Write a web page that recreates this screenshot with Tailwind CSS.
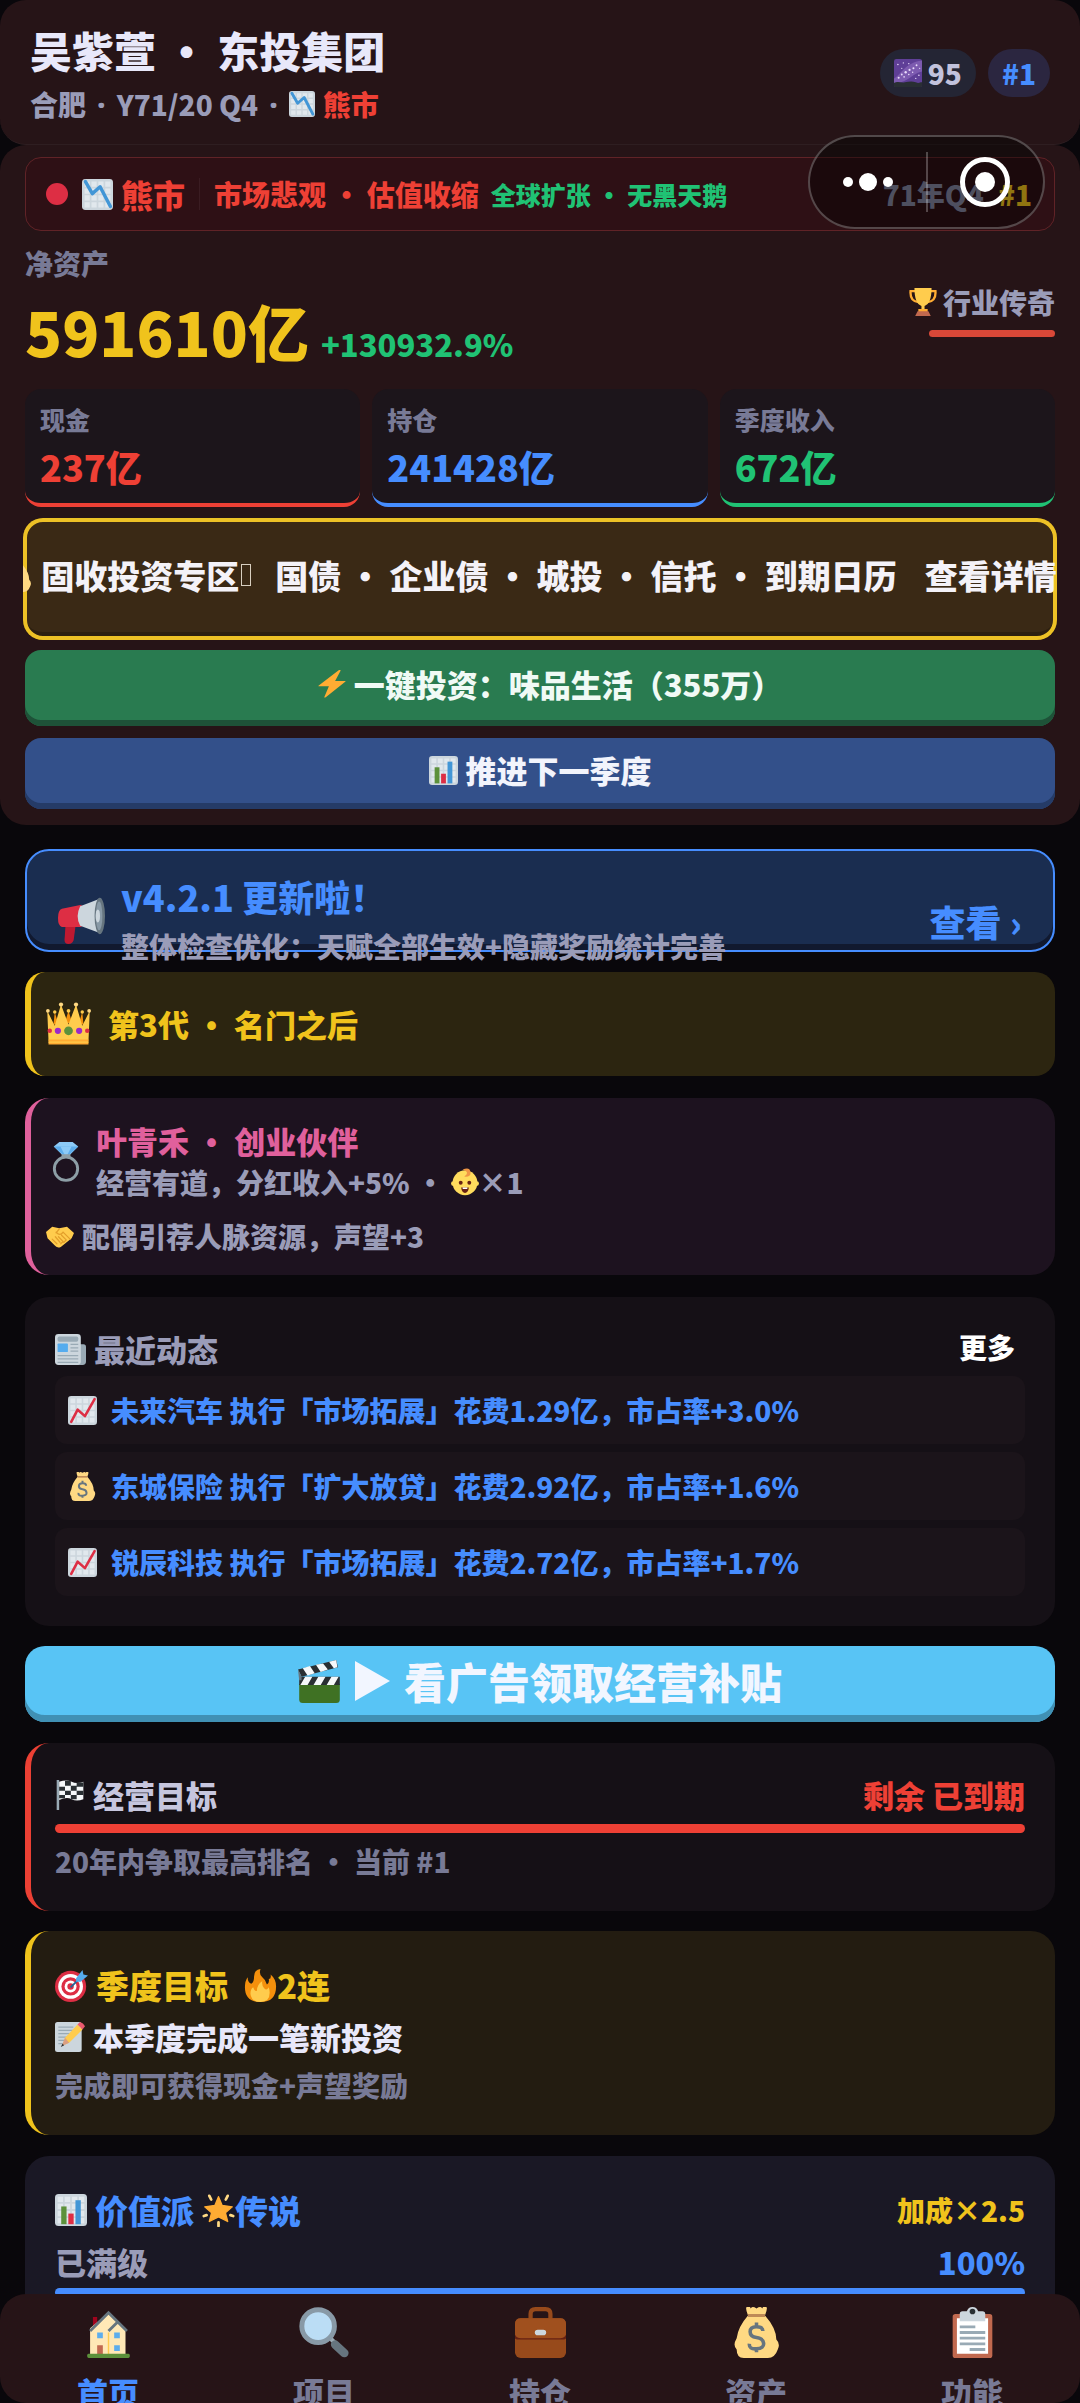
<!DOCTYPE html>
<html lang="zh-CN">
<head>
<meta charset="utf-8">
<meta name="viewport" content="width=device-width, initial-scale=1">
<title>东投集团</title>
<script src="https://cdn.jsdelivr.net/npm/@tailwindcss/browser@4"></script>
</head>
<body class="bg-black font-['Noto_Sans_CJK_SC',sans-serif] font-black text-[#9a9cb8]">
<svg class="hidden" aria-hidden="true">
  <defs>
    <symbol id="grid" viewBox="0 0 36 36">
      <rect width="36" height="36" rx="4" fill="#ccd6dd"/>
      <path fill="#e1e8ed" d="M3 3h6v6H3zM11 3h6v6h-6zM19 3h6v6h-6zM27 3h6v6h-6zM3 11h6v6H3zM11 11h6v6h-6zM19 11h6v6h-6zM27 11h6v6h-6zM3 19h6v6H3zM11 19h6v6h-6zM19 19h6v6h-6zM27 19h6v6h-6zM3 27h6v6H3zM11 27h6v6h-6zM19 27h6v6h-6zM27 27h6v6h-6z"/>
    </symbol>
    <symbol id="down" viewBox="0 0 36 36"><use href="#grid"/><path d="M4 3l8 14 9-8 12 23" fill="none" stroke="#4296d6" stroke-width="4" stroke-linecap="round" stroke-linejoin="round"/></symbol>
    <symbol id="up" viewBox="0 0 36 36"><use href="#grid"/><path d="M4 32l8-15 9 8L33 4" fill="none" stroke="#dd2e44" stroke-width="3.2" stroke-linecap="round" stroke-linejoin="round"/></symbol>
    <symbol id="bars" viewBox="0 0 36 36"><use href="#grid"/><path fill="#5c913b" d="M7 14h6v20H7z"/><path fill="#dd2e44" d="M15 22h6v12h-6z"/><path fill="#4296d6" d="M23 7h6v27h-6z"/></symbol>
    <symbol id="galaxy" viewBox="0 0 36 36">
      <rect width="36" height="36" rx="3" fill="#5f3f97"/>
      <path d="M0 25C8 22 13 5 36 2v14C24 19 17 29 5 31H0z" fill="#7d5bb0"/>
      <g fill="#eadcfb"><circle cx="6" cy="24" r="1.300"/><circle cx="10" cy="20" r="1.200"/><circle cx="13" cy="23" r="1"/><circle cx="15" cy="17" r="1.500"/><circle cx="19" cy="20" r="1"/><circle cx="20" cy="14" r="1.400"/><circle cx="25" cy="12" r="1.300"/><circle cx="29" cy="8" r="1.200"/><circle cx="24" cy="17" r=".9"/><circle cx="5" cy="7" r="1"/><circle cx="12" cy="5" r=".8"/><circle cx="19" cy="6" r=".9"/><circle cx="32" cy="21" r="1"/><circle cx="28" cy="25" r=".8"/><circle cx="10" cy="12" r=".8"/><circle cx="33" cy="12" r=".8"/></g>
      <path d="M0 31c5-3 9 0 14-1s9-2 14 0 6-1 8 0v4q0 2-2 2H2q-2 0-2-2z" fill="#292f33"/>
    </symbol>
    <symbol id="trophy" viewBox="0 0 36 36">
      <path d="M8 4H2q-1 13 10 14M28 4h6q1 13-10 14" fill="none" stroke="#ffac33" stroke-width="3"/>
      <path d="M7 0h22q0 20-9 23v6h-4v-6Q7 20 7 0z" fill="#ffcc4d"/>
      <path d="M12 27h12v4H12z" fill="#ffac33"/><path d="M11 30h14l3 6H8z" fill="#c1694f"/>
    </symbol>
    <symbol id="bolt" viewBox="0 0 36 36"><path d="M27 0L1 20q-1 1 0 1h13L8 35q0 1 2 0l25-20q1-1 0-1H22l7-13q0-2-2-1z" fill="#ffac33"/></symbol>
    <symbol id="mega" viewBox="0 0 36 36">
      <path d="M6 18h8l-2 15q-1 3-4 3t-3-3z" fill="#be1931"/>
      <path d="M3 9l15-3v17L3 23q-3-1-3-7t3-7z" fill="#dd2e44"/>
      <path d="M17 7L33 1v27l-16-6q-4-7 0-15z" fill="#ccd6dd"/>
      <ellipse cx="32" cy="14.500" rx="4" ry="14" fill="#66757f"/><ellipse cx="31.500" cy="14.500" rx="2.500" ry="11" fill="#8899a6"/><ellipse cx="30.500" cy="14.500" rx="1.700" ry="5" fill="#ccd6dd"/>
    </symbol>
    <symbol id="crown" viewBox="0 0 36 36">
      <path d="M7 8l-1 10h4zM18 7l-3 10h6zM29 8l-3 10h4z" fill="#f4900c"/>
      <path d="M1 7l6 12 5-17 6 16 6-16 5 17 6-12-1 24H2z" fill="#ffcc4d"/>
      <g fill="#ffd983"><circle cx="1.500" cy="7" r="1.500"/><circle cx="12" cy="2" r="1.700"/><circle cx="24" cy="2" r="1.700"/><circle cx="34.500" cy="7" r="1.500"/></g>
      <g fill="#ffcc4d"><circle cx="7" cy="8" r="1.400"/><circle cx="18" cy="7" r="1.500"/><circle cx="29" cy="8" r="1.400"/></g>
      <path d="M2 30h32v4H2z" fill="#ffac33"/><path d="M2 31.500h32v1H2z" fill="#ffcc4d"/>
      <circle cx="18" cy="23" r="3.500" fill="#5c913b"/><circle cx="9.500" cy="23" r="2.500" fill="#9c28c9"/><circle cx="26.500" cy="23" r="2.500" fill="#9c28c9"/><circle cx="3" cy="23" r="1.800" fill="#dd2e44"/><circle cx="33" cy="23" r="1.800" fill="#dd2e44"/>
    </symbol>
    <symbol id="ring" viewBox="0 0 36 36">
      <circle cx="18" cy="24" r="10.500" fill="none" stroke="#8d9ea6" stroke-width="2.600"/>
      <path d="M12 0h12l5 4-9 9h-4L7 4z" fill="#8ccaf7"/><path d="M7 4h22l-11 10z" fill="#5dadec"/><path d="M13 4h10l-5 10z" fill="#8ccaf7"/>
      <path d="M14 11h8v3h-8z" fill="#8d9ea6"/>
    </symbol>
    <symbol id="baby" viewBox="0 0 36 36">
      <circle cx="3" cy="20" r="3" fill="#ffdc5d"/><circle cx="33" cy="20" r="3" fill="#ffdc5d"/><circle cx="18" cy="19" r="16" fill="#ffdc5d"/>
      <path d="M15 2q9-4 10 3t-8 6q6-4 2-7-2-1-4-2z" fill="#ef9645"/>
      <circle cx="12.500" cy="19" r="2.500" fill="#662113"/><circle cx="23.500" cy="19" r="2.500" fill="#662113"/><path d="M13 25h10q-1 7-5 7t-5-7z" fill="#662113"/><path d="M15 25h6v2h-6z" fill="#fff"/>
    </symbol>
    <symbol id="shake" viewBox="0 0 36 36">
      <path d="M0 13l8-7 9 2 10-2 9 8-3 7-14 11q-5 2-8-2L2 21z" fill="#ffcc4d"/>
      <path d="M8 22l6 6M12 19l6 7M13 13q5 6 9 0l9 9M17 9l-4 5M19 28l3-3-6-6M23 26l3-3-6-6" fill="none" stroke="#e39f2b" stroke-width="1.600" stroke-linecap="round"/>
    </symbol>
    <symbol id="news" viewBox="0 0 36 36">
      <path d="M26 12h7q3 0 3 3v17q0 4-4 4H5V30h21z" fill="#99aab5"/>
      <rect width="30" height="36" rx="4" fill="#ccd6dd"/><rect x="3" y="3" width="24" height="6" rx="2" fill="#99aab5"/><rect x="3" y="11" width="12" height="10" rx="1" fill="#55acee"/>
      <path d="M18 12h9M18 16h9M18 20h9M3 25h24M3 29h24M3 33h24" stroke="#99aab5" stroke-width="1.500"/>
    </symbol>
    <symbol id="bag" viewBox="0 0 36 36">
      <path d="M12 6h12q8 9 8 17 3 3 1 7-2 6-7 6H9q-5 0-5-6-3-3 0-8 1-8 8-16z" fill="#ffd983"/>
      <path d="M12 6q-2-5-1-6 2-1 3 1 1-2 4 0 3-2 4 0 1-2 3-1 1 1-1 6z" fill="#ffd983"/><path d="M12 5h12v2H12z" fill="#bf8a56"/>
      <path d="M22.500 17q0-3-4.500-3t-4.500 3.500 4.500 4 5 4-5 4-5-3.500M18 11v3M18 29v3" fill="none" stroke="#67757f" stroke-width="2.500"/>
    </symbol>
    <symbol id="clap" viewBox="0 0 36 36">
      <path d="M1 20h34v13q0 3-3 3H4q-3 0-3-3z" fill="#3f7123"/><path d="M1 14h34v7H1z" fill="#292f33"/>
      <path d="M6 14h6l-4 7H2zM17 14h6l-4 7h-6zM28 14h6l-4 7h-6z" fill="#f5f8fa"/>
      <path d="M0 8L32 0l1.500 6L3 14z" fill="#292f33"/><path d="M4 7l6-2 4 6-6 2zM15 4l6-1 4 5-6 2zM26 1.500l6-1.500 1 6-3 1z" fill="#f5f8fa"/>
      <path d="M0 8l3 6v3H1z" fill="#66757f"/>
    </symbol>
    <symbol id="flag" viewBox="0 0 36 36">
      <path d="M2 0h3v36H2z" fill="#99aab5"/><path d="M5 2q9-3 15 0t14 0v21q-8 3-14 0t-15 1z" fill="#f5f8fa"/>
      <path fill="#292f33" d="M12 1h7v6h-7zM26 3h8v5h-8zM5 8h7v5H5zM19 7h7v6h-7zM12 13h7v5h-7zM26 13h8v5h-8zM5 18h7v4H5zM19 18h7v5h-7z"/>
    </symbol>
    <symbol id="target" viewBox="0 0 36 36">
      <circle cx="17" cy="19" r="17" fill="#dd2e44"/><circle cx="17" cy="19" r="13.500" fill="#fff"/><circle cx="17" cy="19" r="10" fill="#dd2e44"/><circle cx="17" cy="19" r="6.500" fill="#fff"/><circle cx="17" cy="19" r="3.500" fill="#dd2e44"/>
      <path d="M17 20L29 8" stroke="#226699" stroke-width="2"/><path d="M23 10l7-9 1 5 5 1-8 7-5 0z" fill="#55acee"/>
    </symbol>
    <symbol id="fire" viewBox="0 0 36 36">
      <path d="M35 19q0 17-17 17T1 20Q1 13 4 9q0 6 4 7 3-1 3-8T18 0q-2 6 2 9t5 8q3-2 2-6 3 0 2-5 6 5 6 13z" fill="#f4900c"/>
      <path d="M28 26q0 10-10 10T7 27q0-5 3-7 1 4 4 4 0-7 6-11-1 5 2 8t5-1q1 3 1 6z" fill="#ffcc4d"/>
    </symbol>
    <symbol id="memo" viewBox="0 0 36 36">
      <rect y="0" width="32" height="36" rx="3" fill="#ccd6dd"/><path d="M4 6h18M4 10h18M4 14h16M4 18h12M4 22h8M4 26h7" stroke="#99aab5" stroke-width="1.500"/>
      <path d="M9 28l3-9L27 3l6 6-16 16z" fill="#ffcc4d"/><path d="M27 3l3-3q4 1 6 5l-3 4z" fill="#ea596e"/><path d="M12 19l5 6-9 4z" fill="#d99e82"/><path d="M9 26l2 2-4 2z" fill="#292f33"/>
    </symbol>
    <symbol id="star" viewBox="0 0 36 36">
      <path d="M18 3l4 9.500L33 14l-7.500 6.500L28 30l-10-5-10 5 2.500-9.500L3 14l11-1.500z" fill="#ffac33" stroke="#ffac33" stroke-width="1.500" stroke-linejoin="round"/>
      <path d="M8 2l2 4M28 2l-2 4M2 24l3-1M34 24l-3-1M18 31v4" stroke="#ffd983" stroke-width="3" stroke-linecap="round"/>
    </symbol>
    <symbol id="house" viewBox="0 0 36 36">
      <path d="M7 7h3v7H7z" fill="#a0041e"/><path d="M5 15L18 4l12 11v19H5z" fill="#ffe8b6"/><path d="M17.500 18h1v16h-1z" fill="#ffcc4d"/>
      <path d="M5 17L18 4l13 13M18 17l7-7" fill="none" stroke="#66757f" stroke-width="2"/>
      <path d="M10 18h4v4h-4zM22 18h4v4h-4zM22 27h4v4h-4z" fill="#5dadec"/><path d="M10 27h4v7h-4z" fill="#c1694f"/><rect x="3" y="33" width="30" height="3" rx="1" fill="#5c913b"/>
    </symbol>
    <symbol id="lens" viewBox="0 0 36 36">
      <path d="M21 21l5 5" stroke="#9aaab4" stroke-width="3"/><path d="M25.500 26.500l6.500 6" stroke="#66757f" stroke-width="6" stroke-linecap="round"/>
      <circle cx="13.500" cy="13.500" r="11.500" fill="#bbddf5" stroke="#8899a6" stroke-width="3.500"/>
    </symbol>
    <symbol id="case" viewBox="0 0 36 36">
      <path d="M11 9V5q0-3.500 3.500-3.500h7Q25 1.500 25 5v4" fill="none" stroke="#974a1b" stroke-width="3"/>
      <rect y="8" width="36" height="28" rx="4" fill="#974a1b"/><path d="M0 22q0 1 3 1h30q3 0 3-1v-2H0z" fill="#662113"/><path d="M4 8h28q4 0 4 4v6q0 4-4 4H4q-4 0-4-4v-6q0-4 4-4z" fill="#a0501e"/><rect x="14" y="16" width="8" height="4" rx="2" fill="#ccd6dd"/>
    </symbol>
    <symbol id="clip" viewBox="0 0 36 36">
      <rect x="4" y="5" width="28" height="31" rx="2" fill="#c1694f"/><path d="M7 8h22v25H7z" fill="#fff"/><path d="M9 5q0-2 2-2h3q1-3 4-3t4 3h3q2 0 2 2v5H9z" fill="#ccd6dd"/><circle cx="18" cy="3.200" r="2" fill="#292f33"/>
      <path d="M9 14h11M9 18h18M9 22h18M9 26h18M16 30h11" stroke="#99aab5" stroke-width="2"/>
    </symbol>
  </defs>
</svg>

<div class="flex h-screen flex-col overflow-hidden bg-[#09070b]">
  <header class="flex items-center justify-between rounded-[26px] border-b border-[#2e1e21] bg-[#261417] px-[30px] pt-[22px] pb-5">
    <div>
      <h1 class="text-[42px] leading-[56px] text-[#e8e8fa]">吴紫萱 • 东投集团</h1>
      <p class="mt-1.5 flex items-center text-[28px] leading-10 whitespace-pre">合肥<span class="mx-1 font-['Noto_Sans']"> · </span>Y71/20 Q4<span class="mx-1 font-['Noto_Sans']"> · </span><svg class="mr-2 size-[26px]"><use href="#down"/></svg><span class="text-[#ee4035]">熊市</span></p>
    </div>
    <div class="flex gap-3 text-[28px] leading-[48px]">
      <span class="flex items-center gap-1.5 rounded-3xl bg-[#242534] px-3.5 text-[#c2c2dc]"><svg class="size-[28px]"><use href="#galaxy"/></svg>95</span>
      <span class="rounded-3xl bg-[#2b2640] px-3.5 text-[#468dff]">#1</span>
    </div>
  </header>

  <main class="min-h-0 flex-1">
    <section class="rounded-[26px] bg-[#261417] px-[25px] pt-3 pb-4">
      <div class="relative flex items-center rounded-2xl border border-[#602327] bg-[#2e1015] py-4 pr-[22px] pl-5 text-[28px] leading-10 whitespace-nowrap text-[#ee4035]">
        <span class="size-[22px] rounded-full bg-[#dd2e44]"></span>
        <svg class="ml-3.5 size-[31px]"><use href="#down"/></svg>
        <strong class="ml-2 text-[32px]">熊市</strong>
        <span class="ml-3.5 h-8 w-px bg-[#3a1c22]"></span>
        <span class="ml-3.5">市场悲观 • 估值收缩</span>
        <span class="ml-3 text-[25px] text-[#20c274]">全球扩张 • 无黑天鹅</span>
        <span class="ml-auto text-[#82849f]">71年Q4</span>
        <span class="ml-3.5 text-[#f0c31c]">#1</span>
        <div class="absolute -top-[23px] right-[9px] flex h-[94px] w-[237px] items-center rounded-full border-2 border-white/25 bg-black/40">
          <button class="flex flex-1 items-center justify-center gap-1.5" aria-label="更多操作"><span class="size-2.5 rounded-full bg-white"></span><span class="size-[18px] rounded-full bg-white"></span><span class="size-2.5 rounded-full bg-white"></span></button>
          <span class="h-[60px] w-0.5 bg-white/25"></span>
          <button class="flex flex-1 justify-center" aria-label="关闭"><span class="flex size-[50px] items-center justify-center rounded-full border-[5px] border-white"><span class="size-5 rounded-full bg-white"></span></span></button>
        </div>
      </div>
      <div class="mt-3 flex items-center justify-between">
        <div class="pb-0.5">
          <p class="text-[28px] leading-10 text-[#787a96]">净资产</p>
          <p class="mt-1.5 flex items-baseline gap-3"><strong class="text-[61px] leading-[84px] text-[#f0c31c]">591610亿</strong><span class="text-[31px] leading-10 text-[#20c274]">+130932.9%</span></p>
        </div>
        <div class="flex flex-col items-end">
          <p class="flex items-center gap-1.5 text-[28px] leading-10"><svg class="size-[28px]"><use href="#trophy"/></svg>行业传奇</p>
          <span class="mt-2 h-[7px] w-[126px] rounded-full bg-[#d94838]"></span>
        </div>
      </div>
      <dl class="mt-3.5 grid grid-cols-3 gap-3">
        <div class="rounded-2xl border-b-4 border-[#ee4035] bg-[#1c151b] px-[15px] pt-2.5 pb-2.5"><dt class="text-[25px] leading-10 text-[#787a96]">现金</dt><dd class="text-[36px] leading-[54px] text-[#ee4035]">237亿</dd></div>
        <div class="rounded-2xl border-b-4 border-[#468dff] bg-[#1c151b] px-[15px] pt-2.5 pb-2.5"><dt class="text-[25px] leading-10 text-[#787a96]">持仓</dt><dd class="text-[36px] leading-[54px] text-[#468dff]">241428亿</dd></div>
        <div class="rounded-2xl border-b-4 border-[#20c274] bg-[#1c151b] px-[15px] pt-2.5 pb-2.5"><dt class="text-[25px] leading-10 text-[#787a96]">季度收入</dt><dd class="text-[36px] leading-[54px] text-[#20c274]">672亿</dd></div>
      </dl>
      <div class="-mx-0.5 mt-[11px]">
        <button class="flex w-full items-center justify-center overflow-hidden rounded-[20px] bg-[#3a2915] pt-9 pr-6 pb-11 text-[33px] leading-[42px] whitespace-nowrap text-[#f4f2f8] shadow-[inset_0_0_0_4px_#edc126,inset_0_-8px_0_0_#2c1f10]"><svg class="mr-2 size-[34px] shrink-0"><use href="#bag"/></svg><span>固收投资专区</span><span class="ml-0.5 h-[22px] w-2.5 shrink-0 border border-[#d8cfc0]"></span><span class="ml-6">国债 • 企业债 • 城投 • 信托 • 到期日历</span><span class="ml-7">查看详情</span></button>
      </div>
      <button class="mt-2.5 flex w-full items-center justify-center gap-2 rounded-2xl bg-[#297b50] pt-3.5 pb-[22px] pl-5 text-[31px] leading-10 text-[#f0faf5] shadow-[inset_0_-6px_0_0_#1e5238]"><svg class="size-[28px]"><use href="#bolt"/></svg>一键投资：味品生活（355万）</button>
      <button class="mt-3 flex w-full items-center justify-center gap-2 rounded-2xl bg-[#33508a] pt-3 pb-[19px] text-[31px] leading-10 text-[#f2f4fc] shadow-[inset_0_-6px_0_0_#253b67]"><svg class="size-[29px]"><use href="#bars"/></svg>推进下一季度</button>
    </section>

    <div class="px-[25px]">
      <a href="#update" class="mt-6 flex h-[103px] items-center rounded-3xl border-2 border-[#468dff] bg-[#1a2d50] pt-10 pr-[31px] pl-[31px] shadow-[inset_0_-6px_0_0_#11192f]">
        <svg class="size-[47px]"><use href="#mega"/></svg>
        <div class="ml-4 flex-1">
          <p class="text-[36px] leading-[50px] text-[#468dff]">v4.2.1 更新啦！</p>
          <p class="text-[28px] leading-[50px]">整体检查优化：天赋全部生效+隐藏奖励统计完善</p>
        </div>
        <span class="text-[36px] leading-[50px] text-[#468dff]">查看 ›</span>
      </a>

      <section class="mt-5 flex items-center gap-[17px] rounded-[20px] border-l-6 border-[#f0c31c] bg-[#2c2510] py-8 pl-[15px] text-[31px] leading-10 text-[#f0c31c]"><svg class="-my-1 size-[45px]"><use href="#crown"/></svg>第3代 • 名门之后</section>

      <section class="mt-[22px] rounded-3xl border-l-6 border-[#e0609c] bg-[#1d121f] pt-[23px] pb-[18px] pl-[15px] text-[28px] leading-[42px]">
        <div class="flex items-center gap-2.5">
          <svg class="size-10"><use href="#ring"/></svg>
          <div>
            <h2 class="text-[31px] leading-10 text-[#e0609c]">叶青禾 • 创业伙伴</h2>
            <p class="flex items-center whitespace-pre">经营有道，分红收入+5% • <svg class="size-[28px]"><use href="#baby"/></svg>×1</p>
          </div>
        </div>
        <p class="mt-3 flex items-center gap-2"><svg class="size-[28px]"><use href="#shake"/></svg>配偶引荐人脉资源，声望+3</p>
      </section>

      <section class="mt-[22px] rounded-3xl bg-[#151016] px-[30px] pt-8 pb-[30px] text-[28px] leading-10">
        <div class="flex items-start justify-between">
          <h2 class="flex items-center gap-2 text-[31px]"><svg class="size-[31px]"><use href="#news"/></svg>最近动态</h2>
          <button class="px-2.5 leading-9 text-white">更多</button>
        </div>
        <ul class="mt-[7px] flex flex-col gap-2 text-[#468dff]">
          <li class="flex items-center gap-3.5 rounded-xl bg-[#1b141a] px-[13px] py-3.5"><svg class="size-[29px]"><use href="#up"/></svg>未来汽车 执行「市场拓展」花费1.29亿，市占率+3.0%</li>
          <li class="flex items-center gap-3.5 rounded-xl bg-[#1b141a] px-[13px] py-3.5"><svg class="size-[29px]"><use href="#bag"/></svg>东城保险 执行「扩大放贷」花费2.92亿，市占率+1.6%</li>
          <li class="flex items-center gap-3.5 rounded-xl bg-[#1b141a] px-[13px] py-3.5"><svg class="size-[29px]"><use href="#up"/></svg>锐辰科技 执行「市场拓展」花费2.72亿，市占率+1.7%</li>
        </ul>
      </section>

      <button class="mt-5 flex w-full items-center justify-center gap-3.5 rounded-[20px] bg-[#58c4f5] pt-[5px] pb-[11px] text-[42px] leading-[60px] text-[#f2f6ff] shadow-[inset_0_-7px_0_0_#4090b4]"><svg class="size-[43px]"><use href="#clap"/></svg><svg class="h-10 w-[35px]" viewBox="0 0 35 40"><path d="M0 0l35 20L0 40z" fill="#f2f6ff"/></svg>看广告领取经营补贴</button>

      <section class="mt-[21px] rounded-3xl border-l-6 border-[#ec4034] bg-[#151016] pt-8 pr-[30px] pb-[30px] pl-6 leading-10">
        <div class="flex items-center justify-between text-[31px]">
          <h2 class="flex items-center gap-2 text-[#c6c6de]"><svg class="size-[30px]"><use href="#flag"/></svg>经营目标</h2>
          <span class="text-[#ee4035]">剩余 已到期</span>
        </div>
        <div class="mt-[9px] h-[9px] rounded-full bg-[#ee4035]"></div>
        <p class="mt-2 text-[28px] text-[#787a96]">20年内争取最高排名 • 当前 #1</p>
      </section>

      <section class="mt-5 rounded-3xl border-l-6 border-[#f0c31c] bg-[#231c11] pt-[34px] pb-[30px] pl-6 leading-10">
        <h2 class="flex items-center gap-2 text-[33px] text-[#f0c31c]"><svg class="size-[33px]"><use href="#target"/></svg>季度目标<span class="ml-2 flex items-center"><svg class="size-[33px]"><use href="#fire"/></svg>2连</span></h2>
        <p class="mt-3 flex items-center gap-2 text-[31px] text-[#e8e8fa]"><svg class="size-[30px]"><use href="#memo"/></svg>本季度完成一笔新投资</p>
        <p class="mt-2 text-[28px] text-[#787a96]">完成即可获得现金+声望奖励</p>
      </section>

      <section class="mt-[21px] rounded-3xl bg-[#1a1825] px-[30px] pt-[34px] pb-[30px] text-[31px] leading-10">
        <div class="flex items-center justify-between">
          <h2 class="flex items-center gap-2 text-[33px] text-[#468dff]"><svg class="size-8"><use href="#bars"/></svg>价值派<span class="flex items-center"><svg class="size-[33px]"><use href="#star"/></svg>传说</span></h2>
          <span class="text-[28px] text-[#f0c31c]">加成×2.5</span>
        </div>
        <div class="mt-3 flex justify-between"><span>已满级</span><span class="text-[#468dff]">100%</span></div>
        <div class="mt-1.5 h-[9px] rounded-full bg-[#468dff]"></div>
      </section>
    </div>
  </main>

  <nav class="relative grid h-[109px] shrink-0 grid-cols-5 overflow-hidden rounded-[26px] bg-[#261417] pt-[13px] text-[31px] leading-10 text-[#787a96]">
    <a href="#home" class="flex flex-col items-center gap-3.5 text-[#468dff]"><svg class="size-[51px] shrink-0"><use href="#house"/></svg>首页</a>
    <a href="#projects" class="flex flex-col items-center gap-3.5"><svg class="size-[51px] shrink-0"><use href="#lens"/></svg>项目</a>
    <a href="#holdings" class="flex flex-col items-center gap-3.5"><svg class="size-[51px] shrink-0"><use href="#case"/></svg>持仓</a>
    <a href="#assets" class="flex flex-col items-center gap-3.5"><svg class="size-[51px] shrink-0"><use href="#bag"/></svg>资产</a>
    <a href="#features" class="flex flex-col items-center gap-3.5"><svg class="size-[51px] shrink-0"><use href="#clip"/></svg>功能</a>
  </nav>
</div>
</body>
</html>
